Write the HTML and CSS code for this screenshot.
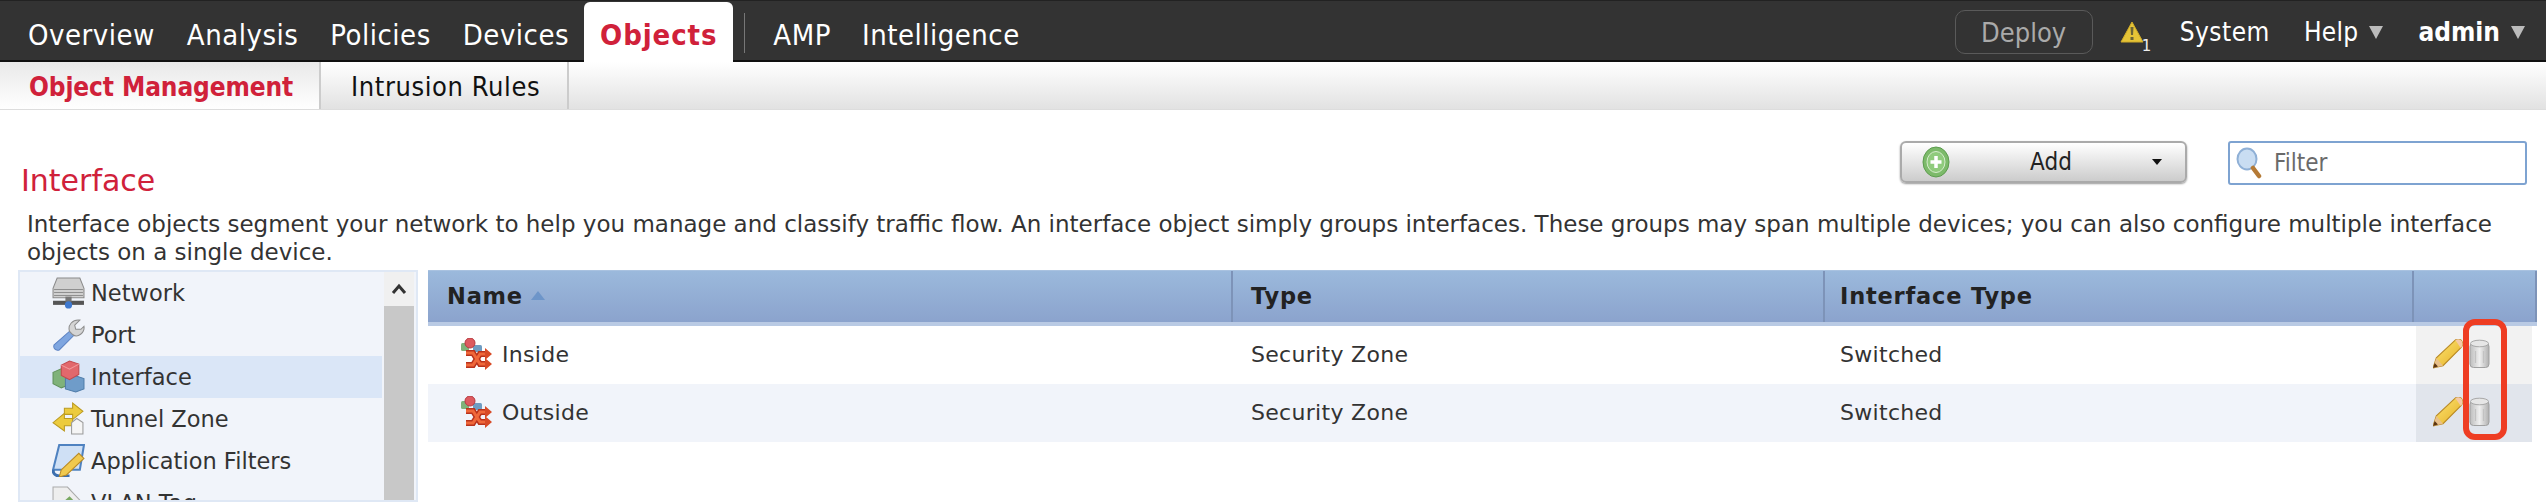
FILE: index.html
```html
<!DOCTYPE html>
<html lang="en">
<head>
<meta charset="utf-8">
<title>Interface objects</title>
<link rel="stylesheet" href="styles.css">
</head>
<body>
<svg class="defs" width="0" height="0" aria-hidden="true">
  <defs>
    <linearGradient id="pencilBody" x1="0" y1="0" x2="1" y2="1">
      <stop offset="0" stop-color="#ffe97a"/><stop offset="1" stop-color="#e3ac20"/>
    </linearGradient>
    <linearGradient id="canBody" x1="0" y1="0" x2="1" y2="0">
      <stop offset="0" stop-color="#bdbdbd"/><stop offset=".5" stop-color="#efefef"/><stop offset="1" stop-color="#b0b0b0"/>
    </linearGradient>
    <symbol id="pencil" viewBox="1 2 27 27">
      <path d="M1 28l3-9L21 3c2-1.500 5-1 6 1s1 4-1 6L10 26z" fill="url(#pencilBody)" stroke="#b98a26" stroke-width="1"/>
      <path d="M21 3c2-1.500 5-1 6 1s1 4-1 6z" fill="#f4c9a8"/>
      <path d="M1 28l3-9 6 7z" fill="#e8c08a"/>
      <path d="M1 28l1.500-4.500 3 3.300z" fill="#5b3410"/>
    </symbol>
    <symbol id="can" viewBox="1 0 20 30">
      <rect x="1.500" y="4" width="19" height="24.500" rx="3.500" fill="url(#canBody)" stroke="#a0a0a0"/>
      <ellipse cx="11" cy="4.500" rx="9" ry="3.300" fill="#e6e6e6" stroke="#a8a8a8"/>
      <path d="M7 12v12M15 12v12" stroke="#c2c2c2" stroke-width="1.200"/>
    </symbol>
    <symbol id="zone" viewBox="0 0 32 32">
      <rect x="1" y="5" width="8" height="8" rx="1.500" fill="#7fb27a"/>
      <rect x="13" y="7" width="9" height="7" rx="1.500" fill="#6f9cc2"/>
      <circle cx="10" cy="5" r="5" fill="#dd5a5f" stroke="#b53a40"/>
      <path d="M6 15h7l7 11h6M6 27h7l7-11h6" fill="none" stroke="#b8321c" stroke-width="6"/>
      <path d="M6 15h7l7 11h6M6 27h7l7-11h6" fill="none" stroke="#f0683a" stroke-width="3"/>
      <path d="M25 10l7 6-7 6zM25 20l7 6-7 6z" fill="#d84a26"/>
    </symbol>
  </defs>
</svg>

<header class="topbar">
  <nav class="mainnav">
    <a class="mainnav-item">Overview</a>
    <a class="mainnav-item">Analysis</a>
    <a class="mainnav-item">Policies</a>
    <a class="mainnav-item">Devices</a>
    <a class="mainnav-item is-active">Objects</a>
    <span class="mainnav-sep"></span>
    <a class="mainnav-item is-amp">AMP</a>
    <a class="mainnav-item">Intelligence</a>
  </nav>
  <div class="usernav">
    <span class="deploy">Deploy</span>
    <span class="alert">
      <svg width="24" height="22" viewBox="0 0 24 22"><path d="M12 1L23 21H1z" fill="#e5c437" stroke="#d0ac28" stroke-linejoin="round"/><path d="M10.500 6h3l-.5 8h-2zM10.500 16h3v3h-3z" fill="#6b6436"/></svg>
      <span class="alert-count">1</span>
    </span>
    <a class="usernav-item is-system">System</a>
    <a class="usernav-item is-help">Help<span class="caret"></span></a>
    <a class="usernav-item is-user">admin<span class="caret"></span></a>
  </div>
</header>

<div class="subbar">
  <a class="subtab is-active">Object Management</a>
  <a class="subtab">Intrusion Rules</a>
</div>

<main class="content">
  <div class="titlerow">
    <h1 class="title">Interface</h1>
    <div class="tools">
      <button class="addbtn" type="button">
        <svg width="28" height="32" viewBox="0 0 28 32"><ellipse cx="14" cy="16" rx="13" ry="15" fill="#7cba6a" stroke="#5c9c4e"/><ellipse cx="14" cy="16" rx="9" ry="10.500" fill="#8fcb7c" stroke="#d6eccd"/><path d="M14 10v12M8.500 16h11" stroke="#fff" stroke-width="3.500"/></svg>
        <span class="addbtn-label">Add</span>
        <span class="addbtn-caret"></span>
      </button>
      <div class="filter">
        <svg width="26" height="32" viewBox="0 0 26 32"><ellipse cx="11" cy="12" rx="9.500" ry="10.500" fill="#c9ddf2" stroke="#8fb0d6" stroke-width="2"/><path d="M17 21l6 8" stroke="#b57a35" stroke-width="4.500" stroke-linecap="round"/></svg>
        <span class="filter-text">Filter</span>
      </div>
    </div>
  </div>
  <p class="desc">Interface objects segment your network to help you manage and classify traffic flow. An interface object simply groups interfaces. These groups may span multiple devices; you can also configure multiple interface objects on a single device.</p>

  <div class="panels">
    <aside class="side">
      <ul class="side-list">
        <li class="side-item">
          <svg class="side-icon" viewBox="0 0 32 32"><path d="M5 2h22l4 10v9H1v-9z" fill="#d0d0d0" stroke="#8a8a8a"/><path d="M2 13h28M2 16h28M2 19h28" stroke="#8f8f8f"/><rect x="1" y="24" width="30" height="4" fill="#555"/><rect x="13" y="20" width="6" height="5" fill="#777"/><circle cx="16" cy="28" r="3.500" fill="#3f79cf"/></svg>
          Network</li>
        <li class="side-item">
          <svg class="side-icon" viewBox="0 0 32 32"><path d="M2 26L18 12l4 4L7 31c-4 1-6-2-5-5z" fill="#7fa6e0" stroke="#5d83c4"/><path d="M17 13c-2-6 3-12 10-11l-5 5 1 4h5l3-3c1 6-6 12-11 8z" fill="#d4d4d4" stroke="#8d8d8d"/></svg>
          Port</li>
        <li class="side-item is-active">
          <svg class="side-icon" viewBox="0 0 32 32"><path d="M1 12l9-4 7 5v11l-8 3-8-4z" fill="#7fb27a" stroke="#5f9159"/><path d="M13 18l9-3 9 3v10l-8 3-10-3z" fill="#6f9cc9" stroke="#4f7ca9"/><path d="M9 5l8-4 9 3v10l-9 5-8-4z" fill="#e2686c" stroke="#c2484c"/><path d="M9 5l8 4 9-5" fill="none" stroke="#f29a9c"/></svg>
          Interface</li>
        <li class="side-item">
          <svg class="side-icon" viewBox="0 0 32 32"><path d="M12 6h8V1l10 8-10 8v-5h-8z" fill="#eccb3e" stroke="#bb9a20"/><path d="M20 16h-8v-5L1 20l11 8v-5h8z" fill="#eccb3e" stroke="#bb9a20"/><path d="M19 20l5-4 6 4v11H19z" fill="#f5f5f5" stroke="#9a9a9a"/></svg>
          Tunnel Zone</li>
        <li class="side-item">
          <svg class="side-icon" viewBox="0 0 32 32"><path d="M7 1h24l-4 24H1z" fill="#cfe0f5" stroke="#4f82c0" stroke-width="2"/><path d="M1 25c0 4 3 6 6 6h10" fill="none" stroke="#3d6fae" stroke-width="3"/><path d="M9 25L26 9l5 5-17 16-7 2z" fill="#f0c94e" stroke="#b98a26"/></svg>
          Application Filters</li>
        <li class="side-item">
          <svg class="side-icon" viewBox="0 0 32 32"><path d="M1 1h14l16 17-13 13L1 15z" fill="#eee" stroke="#aaa"/><path d="M9 17l8-7 8 8-7 7z" fill="#79a860"/></svg>
          VLAN Tag</li>
      </ul>
      <div class="scroll">
        <span class="scroll-up">
          <svg width="16" height="12" viewBox="0 0 16 12"><path d="M2 10l6-7 6 7" fill="none" stroke="#333" stroke-width="3"/></svg>
        </span>
        <span class="scroll-track"></span>
      </div>
    </aside>

    <section class="grid">
      <div class="row row-head">
        <div class="cell cell-name">Name <span class="sort"></span></div>
        <div class="cell cell-type">Type</div>
        <div class="cell cell-itype">Interface Type</div>
        <div class="cell cell-act"></div>
      </div>
      <div class="row">
        <div class="cell cell-name"><svg class="zone" width="32" height="32"><use href="#zone"/></svg>Inside</div>
        <div class="cell cell-type">Security Zone</div>
        <div class="cell cell-itype">Switched</div>
        <div class="cell cell-act"><svg width="30" height="30"><use href="#pencil"/></svg><svg width="21" height="30"><use href="#can"/></svg></div>
      </div>
      <div class="row row-alt">
        <div class="cell cell-name"><svg class="zone" width="32" height="32"><use href="#zone"/></svg>Outside</div>
        <div class="cell cell-type">Security Zone</div>
        <div class="cell cell-itype">Switched</div>
        <div class="cell cell-act"><svg width="30" height="30"><use href="#pencil"/></svg><svg width="21" height="30"><use href="#can"/></svg></div>
      </div>
      <span class="callout"></span>
    </section>
  </div>
</main>
</body>
</html>
```

FILE: styles.css
```css
* { box-sizing: border-box; }
html, body { margin: 0; height: 502px; overflow: hidden; }
body { font-family: "DejaVu Sans", sans-serif; background: #fff; color: #333; }
.defs { position: absolute; }

.topbar { height: 62px; background: #333; border-top: 1px solid #222; box-shadow: inset 0 -2px #111; display: flex; justify-content: space-between; align-items: flex-end; padding-left: 12px; }
.mainnav { display: flex; align-items: flex-end; height: 60px; }
.mainnav-item { font: 29px "DejaVu Sans Condensed", "DejaVu Sans", sans-serif; letter-spacing: .5px; color: #fff; padding: 0 16px; height: 60px; line-height: 66px; white-space: nowrap; }
.mainnav-item:nth-child(4) { padding-right: 15px; }
.mainnav-item.is-amp { padding-right: 15px; }
.mainnav-item.is-active { background: #fff; color: #d0213a; font-weight: bold; letter-spacing: .9px; border-radius: 6px 6px 0 0; }
.mainnav-sep { width: 1px; height: 40px; background: #777; margin: 0 12px 9px 11px; }
.usernav { display: flex; align-items: center; height: 60px; padding-right: 21px; }
.deploy { font: 27px "DejaVu Sans Condensed", "DejaVu Sans", sans-serif; color: #aaa; border: 1px solid #5a5a5a; border-radius: 10px; width: 138px; height: 44px; display: flex; align-items: center; justify-content: center; }
.alert { position: relative; margin-left: 27px; width: 60px; height: 22px; display: flex; }
.alert-count { position: absolute; left: 22px; top: 18px; font-size: 15px; line-height: 15px; color: #eee; }
.usernav-item { font: 26px "DejaVu Sans Condensed", "DejaVu Sans", sans-serif; color: #fff; white-space: nowrap; display: flex; align-items: center; }
.usernav-item.is-system { letter-spacing: .5px; }
.usernav-item.is-help { margin-left: 34px; letter-spacing: .3px; }
.usernav-item.is-user { font-weight: bold; margin-left: 35px; }
.caret { width: 0; height: 0; border-left: 7px solid transparent; border-right: 7px solid transparent; border-top: 13px solid #bbb; margin-left: 11px; }

.subbar { height: 48px; background: linear-gradient(#fff, #e2e2e2); border-bottom: 1px solid #ddd; display: flex; }
.subtab { font: 27px/48px "DejaVu Sans Condensed", "DejaVu Sans", sans-serif; letter-spacing: .6px; padding: 2px 0 0 30px; display: flex; align-items: center; color: #111; border-right: 2px solid #ccc; width: 248px; white-space: nowrap; }
.subtab.is-active { width: 321px; padding-left: 29px; font-size: 26px; letter-spacing: -.1px; color: #d0213a; font-weight: bold; background: linear-gradient(#e9e9e9, #fff); }

.titlerow { display: flex; justify-content: space-between; align-items: flex-start; height: 97px; padding: 31px 19px 0 21px; }
.title { font: 400 30px/34px "DejaVu Sans", sans-serif; color: #d0213a; margin: 23px 0 0; }
.tools { display: flex; gap: 41px; }
.addbtn { width: 287px; height: 42px; border: 2px solid #aaa; border-radius: 6px; background: linear-gradient(#fff, #ccc); box-shadow: 0 1px 2px #999; padding: 0 23px 0 20px; display: flex; align-items: center; font: 24px "DejaVu Sans Condensed", sans-serif; color: #222; }
.addbtn-label { flex: 1; text-align: center; }
.addbtn-caret { width: 0; height: 0; border-left: 5px solid transparent; border-right: 5px solid transparent; border-top: 6px solid #111; }
.filter { width: 299px; height: 44px; border: 2px solid #7ea3d1; border-radius: 3px; display: flex; align-items: center; padding-left: 6px; gap: 12px; }
.filter-text { font: 24px "DejaVu Sans Condensed", sans-serif; color: #6a6a6a; }

.desc { margin: 0; padding: 3px 40px 0 27px; font-size: 23px; line-height: 28px; color: #333; height: 63px; }

.panels { display: flex; gap: 10px; padding-left: 18px; align-items: flex-start; height: 232px; }
.side { width: 400px; height: 232px; flex: none; background: #f1f4fa; border: 2px solid #dfe8f5; display: flex; overflow: hidden; padding-right: 2px; }
.side-list { list-style: none; margin: 0; padding: 0; width: 362px; flex: none; }
.side-item { height: 42px; display: flex; align-items: center; gap: 6px; padding: 0 0 1px 32px; font-size: 22.500px; color: #333; white-space: nowrap; }
.side-item.is-active { background: #dae6f7; }
.side-icon { width: 33px; height: 33px; flex: none; }
.scroll { width: 30px; margin-left: 2px; display: flex; flex-direction: column; background: #c8c8c8; }
.scroll-up { height: 34px; background: #f0f0f0; display: flex; align-items: center; justify-content: center; }
.scroll-track { flex: 1; }

.grid { position: relative; width: 2109px; flex: none; }
.row { display: grid; grid-template-columns: 805px 592px 591px 116px; width: 2104px; height: 58px; }
.row-head { height: 56px; background: linear-gradient(#9bb9dc, #8ba3cd); border-top: 1px solid #a9c2e0; border-bottom: 4px solid #b9cae4; width: 2109px; grid-template-columns: 805px 592px 589px 123px; }
.row-alt { background: #f1f4fa; }
.cell { font-size: 22px; letter-spacing: .3px; display: flex; align-items: center; padding: 0 0 2px 18px; color: #333; white-space: nowrap; }
.cell-itype { padding-left: 15px; }
.row-head .cell { font-weight: bold; font-size: 22.500px; letter-spacing: .8px; color: #222; border-right: 2px solid #7d93b8; }
.row .cell-name { padding-left: 32px; gap: 10px; }
.row-head .cell-name { padding-left: 19px; gap: 8px; }
.sort { width: 0; height: 0; border-left: 7px solid transparent; border-right: 7px solid transparent; border-bottom: 9px solid #6d95c9; }
.cell-act { background: #f2f2f2; padding-left: 17px; gap: 6px; padding-bottom: 3px; }
.row-alt .cell-act { background: #e1e5ec; }
.row-head .cell-act { background: none; }
.callout { position: absolute; left: 2035px; top: 49px; width: 44px; height: 121px; border: 6px solid #ee3d23; border-radius: 12px; }
```
